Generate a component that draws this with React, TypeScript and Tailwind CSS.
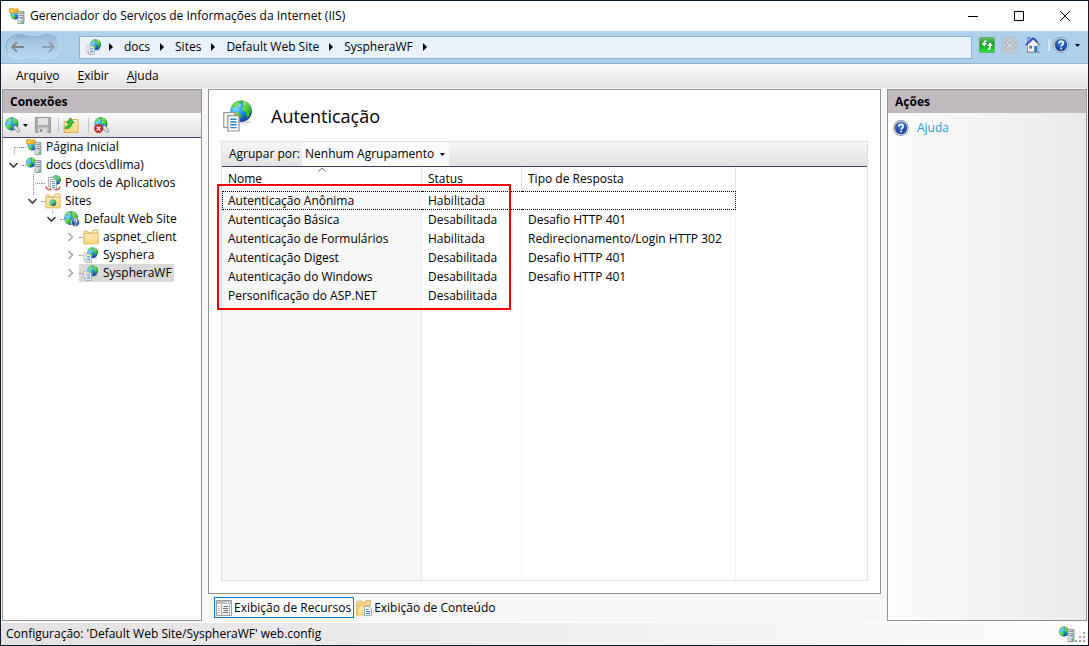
import { useState } from "react";
import type { ReactNode } from "react";

/* ---------- Shared drawing pieces ---------- */

function Gradients() {
  return (
    <svg className="absolute size-0" aria-hidden="true">
      <defs>
        <radialGradient id="ocean" cx="0.25" cy="0.35" r="0.85">
          <stop offset="0" stopColor="#8fe6ff" />
          <stop offset="0.35" stopColor="#2ba0f0" />
          <stop offset="0.7" stopColor="#1557c8" />
          <stop offset="1" stopColor="#0b2f92" />
        </radialGradient>
        <linearGradient id="land" x1="0" y1="0" x2="1" y2="1">
          <stop offset="0" stopColor="#b4f65a" />
          <stop offset="0.55" stopColor="#3fc632" />
          <stop offset="1" stopColor="#128a26" />
        </linearGradient>
        <linearGradient id="folder" x1="0" y1="0" x2="0" y2="1">
          <stop offset="0" stopColor="#fdeab0" />
          <stop offset="1" stopColor="#f8d680" />
        </linearGradient>
        <linearGradient id="metal" x1="0" y1="0" x2="1" y2="0">
          <stop offset="0" stopColor="#eef2f5" />
          <stop offset="1" stopColor="#a3b0bb" />
        </linearGradient>
        <linearGradient id="green" x1="0" y1="0" x2="0" y2="1">
          <stop offset="0" stopColor="#6cc070" />
          <stop offset="0.45" stopColor="#109a1e" />
          <stop offset="1" stopColor="#22ee38" />
        </linearGradient>
        <radialGradient id="helpBlue" cx="0.5" cy="0.25" r="0.8">
          <stop offset="0" stopColor="#4a86e0" />
          <stop offset="1" stopColor="#0a2f98" />
        </radialGradient>
        <linearGradient id="pill" x1="0" y1="0" x2="0" y2="1">
          <stop offset="0" stopColor="#8fb2d1" />
          <stop offset="0.3" stopColor="#a6c6e2" />
          <stop offset="1" stopColor="#bcd9f1" />
        </linearGradient>
      </defs>
    </svg>
  );
}

function Globe({ x, y, r }: { x: number; y: number; r: number }) {
  return (
    <g transform={`translate(${x} ${y}) scale(${r / 8})`}>
      <circle r="8" fill="url(#ocean)" />
      <path
        d="M-5.500-5.800C-3.800-7.400-1.400-8 .6-7.900L.2-6.400-1.600-5.600-1.400-4-3.400-2.800-4.600-3.400-6.200-2.200-7-3.400C-6.600-4.400-6.200-5.200-5.500-5.800Z"
        fill="url(#land)"
      />
      <path d="M1.800-7.800C5.200-7 7.600-4 8-.6L6.800 1.400 6.200 4 4.600 4.800 3.600 2.600 3.800.6 1.800 0 .8-2 2-4 1.200-5.600Z" fill="url(#land)" />
      <path d="M-6 1.200-3.600.4-1 1.600.8 3.600-.6 5.400-.8 7.800C-3.600 7.600-6 5.600-7 3Z" fill="url(#land)" />
      <ellipse cx="-2.200" cy="-4.600" rx="2.600" ry="1.500" fill="#fff" opacity="0.35" />
    </g>
  );
}

function Tower() {
  return (
    <g transform="translate(8.500 3)">
      <path d="M.5.500h6v12h-6z" fill="url(#metal)" stroke="#8492a0" strokeWidth="0.800" />
      <path d="M1.500 2.500h4M1.500 4.500h4M1.500 6.500h4" stroke="#5f6c78" strokeWidth="0.800" />
      <path d="M1.500 3.300h4M1.500 5.300h4" stroke="#fff" strokeWidth="0.700" />
      <path d="M4 10h2v1.600H4z" fill="#2edb1f" />
    </g>
  );
}

function Icon({ children, size = "size-4" }: { children: ReactNode; size?: string }) {
  return (
    <svg viewBox="0 0 16 16" className={`${size} shrink-0`} aria-hidden="true">
      {children}
    </svg>
  );
}

function ServerIcon({ home = false }: { home?: boolean }) {
  return (
    <Icon>
      <Globe x={home ? 6.5 : 5} y={home ? 6.5 : 5.5} r={5} />
      {home && (
        <g>
          <path d="M0 .8 4 0l1.600 1.200L9 .6l.4 3.600-4.400.8L.6 5Z" fill="#f5b52c" stroke="#d98c0c" strokeWidth="0.500" />
          <path d="M1.400 2.200 4 1.600 4.400 3.800Z" fill="#ffe99a" />
        </g>
      )}
      <Tower />
    </Icon>
  );
}

function SiteIcon({ size }: { size?: string }) {
  return (
    <Icon size={size}>
      <ellipse cx="10.600" cy="11" rx="4" ry="0.900" fill="#000" opacity="0.150" />
      <Globe x={9.500} y={5.600} r={5.400} />
      <path d="M.9 6.300h5.500v7.400H.900z" fill="#fff" stroke="#9a9a9a" strokeWidth="0.600" />
      <path d="M2.900 7.800h5.600v7.700H2.900z" fill="#fff" stroke="#8f8f8f" strokeWidth="0.600" />
      <path d="M4.100 9.600h3.200M4.100 11h3.200M4.100 12.400h3.200M4.100 13.800h3.200" stroke="#2f7fc8" strokeWidth="0.700" />
    </Icon>
  );
}

function PoolsIcon() {
  return (
    <Icon>
      <Globe x={11} y={5} r={4.800} />
      <path d="M3.500 2.500h6v9h-6z" fill="#fff" stroke="#9a9a9a" strokeWidth="0.700" />
      <path d="M1 11.500c.2 2.800 3 3.400 5.500 3.200M15 11.500c-.2 2.800-3 3.400-5.500 3.200" fill="none" stroke="#df5a50" strokeWidth="1.500" />
      <path d="M5.500 4.500h6v9.500h-6z" fill="#fff" stroke="#8f8f8f" strokeWidth="0.700" />
      <path d="M7 6.500h3M7 8.500h3M7 10.500h3M7 12.500h3" stroke="#2f7fc8" strokeWidth="0.800" />
    </Icon>
  );
}

function FolderShape() {
  return (
    <g>
      <path d="M1 3.500V2h3.500l1 1.500H9L10 1h5v13.500H1z" fill="#f6d88a" stroke="#dcb566" strokeWidth="0.800" />
      <path d="M10.500 2.500h3.500" stroke="#fff" strokeWidth="1" />
      <path d="M1 4.500h14v10.500H1z" fill="url(#folder)" stroke="#e0b662" strokeWidth="0.800" />
    </g>
  );
}

function FolderIcon({ globe = false }: { globe?: boolean }) {
  return (
    <Icon>
      <FolderShape />
      {globe && <Globe x={8} y={9.700} r={3.300} />}
    </Icon>
  );
}

function DefaultSiteIcon() {
  return (
    <Icon>
      <Globe x={7} y={7} r={6.900} />
      <circle cx="11.400" cy="11.400" r="4.200" fill="#33589c" stroke="#dfe7f3" strokeWidth="0.900" />
      <path d="M10 10.400c0-2 3-2 3-.2 0 1.200-1.500 1.200-1.500 2.400M11.500 13.400v1" stroke="#fff" strokeWidth="1.100" fill="none" />
    </Icon>
  );
}

function ConnectIcon({ remove = false }: { remove?: boolean }) {
  return (
    <Icon>
      <Globe x={6.800} y={6.800} r={6.600} />
      <path d="M8.500 9.200 11 8.400l3.800 4.600.2 2-2.600.2-4-3.800Z" fill="#c3ccd3" stroke="#8594a0" strokeWidth="0.700" />
      <path d="m10.200 10 3.200 3.600" stroke="#fff" strokeWidth="1" />
      {remove && (
        <g>
          <circle cx="4.600" cy="11.600" r="4.200" fill="#d81e1e" stroke="#a30d0d" strokeWidth="0.500" />
          <path d="m2.800 9.800 3.600 3.600M6.400 9.800l-3.600 3.600" stroke="#fff" strokeWidth="1.400" />
        </g>
      )}
    </Icon>
  );
}

function SaveIcon() {
  return (
    <Icon>
      <path d="M.5.500h15v15H.500z" fill="#adadad" stroke="#989898" />
      <path d="M3 1h10v7H3z" fill="#e2e2e2" />
      <path d="M3.500 10.500h9V16h-9z" fill="#d6d6d6" />
      <path d="M5 12h2v3H5z" fill="#8f8f8f" />
    </Icon>
  );
}

function UpFolderIcon() {
  return (
    <Icon>
      <path d="M1 4.500h7l1-2h6v13H1z" fill="url(#folder)" stroke="#d8ab52" strokeWidth="0.900" />
      <path d="M10 3.500h4" stroke="#fff" />
      <path d="M2 9.800c2.500 0 3.500-1.300 3.600-3.800H3.500L7.400.800l3.800 5.200H8.800c0 3.700-2.300 6.300-6.800 5.500Z" fill="#35c435" stroke="#158a1b" strokeWidth="0.600" />
    </Icon>
  );
}

function HelpIcon() {
  return (
    <Icon>
      <circle cx="8" cy="8" r="7.900" fill="#8e979f" />
      <circle cx="8" cy="8" r="7.100" fill="#dfe5ea" />
      <circle cx="8" cy="8" r="6.200" fill="url(#helpBlue)" />
      <path d="M5.900 6.500c.1-2.900 4.300-2.800 4.300-.3 0 1.600-2 1.700-2 3.400" stroke="#fff" strokeWidth="1.700" fill="none" />
      <path d="M7.300 10.700h1.800v1.700H7.300z" fill="#fff" />
    </Icon>
  );
}

function RefreshIcon() {
  return (
    <Icon>
      <rect x="0.500" y="0.500" width="15" height="15" rx="1" fill="url(#green)" stroke="#6fa877" />
      <path d="M7.500 3.200C5.500 3 4.500 4 4.300 6H2.200l3 3.800L8.200 6H6.100c0-.9.400-1.300 1.400-1.300Z" fill="#fff" />
      <path d="M8.700 13c2 .2 3-.8 3.200-2.800l.1-1.200h2L11 5.200 8 9h2.100v1.200c0 .9-.4 1.300-1.400 1.300Z" fill="#fff" />
    </Icon>
  );
}

function StopIcon() {
  return (
    <Icon>
      <rect x="0.500" y="0.500" width="15" height="15" rx="1" fill="#c0cad3" stroke="#b4bec8" />
      <path d="m3.500 4.500 9 7.500M12.500 4.500l-9 7.500" stroke="#929ba4" strokeWidth="2.800" />
      <path d="m3.800 4.800 8.400 7M12.200 4.800l-8.400 7" stroke="#dbe1e6" strokeWidth="1.500" />
    </Icon>
  );
}

function HomeIcon() {
  return (
    <Icon>
      <path d="M3 .8h2.200v5H3z" fill="#e9eefb" stroke="#2946a8" strokeWidth="0.800" />
      <path d="M2.500 7.500 8.500 2l4.500 5.500v7.500H2.500z" fill="#f4f6fb" stroke="#7b8494" strokeWidth="0.800" />
      <path d="M8.300 1 15.500 8.300" stroke="#8a8f99" strokeWidth="1.200" />
      <path d="M.6 8.200 8.300 1l4.200 4.300" fill="none" stroke="#1f45c6" strokeWidth="1.800" strokeDasharray="1.500 0.300" />
      <path d="M4.200 8.800h2.800v2.800H4.200z" fill="#66778d" />
      <path d="M9.200 9h3v6h-3z" fill="#2780c4" />
      <path d="M1 15.400h14" stroke="#8c8f96" strokeWidth="0.800" />
    </Icon>
  );
}

function FeaturesIcon() {
  return (
    <Icon>
      <path d="M.5.500h15v15H.500z" fill="#fff" stroke="#9a9a9a" />
      <path d="M1 1h14v3H1z" fill="#b9bdc1" />
      <path d="M9 2.500h1M11 2.500h1M13 2.500h1" stroke="#fff" />
      <path d="M2 6.500h2M2 8.500h2M2 10.500h2M2 12.500h2" stroke="#b5b5b5" />
      <path d="M5.500 4v11M13.500 4v11" stroke="#b0b0b0" />
      <path d="M6 5h7v10H6z" fill="#ececec" />
      <path d="M8 6.500h4M7 8.500h5M8 10.500h4M7 12.500h5" stroke="#777" />
    </Icon>
  );
}

function ContentIcon() {
  return (
    <Icon>
      <path d="M.5 15V3.500l1-2.500h4l1 1.500H9L10 .5h4.500V6" fill="#f3d58a" stroke="#dcb161" strokeWidth="0.800" />
      <path d="M3.500 5.500h11L11 15H.500z" fill="url(#folder)" stroke="#dcb161" strokeWidth="0.800" />
      <path d="M8.500 6.500h4.500l2.500 2.500v6.500h-7z" fill="#fff" stroke="#8f9bab" strokeWidth="0.800" />
      <path d="M10 9.500h2.500M10 11.500h4M10 13.500h4" stroke="#2d7bd0" />
    </Icon>
  );
}

function DownCaret() {
  return (
    <svg viewBox="0 0 5 3" className="h-[3px] w-[5px] shrink-0" aria-hidden="true">
      <path d="M0 0h5L2.500 3z" fill="#000" />
    </svg>
  );
}

function RightCaret() {
  return (
    <svg viewBox="0 0 4 8" className="h-2 w-1 shrink-0" aria-hidden="true">
      <path d="M0 0v8l4-4z" fill="#000" />
    </svg>
  );
}

/* ---------- Window sections ---------- */

function TitleBar() {
  return (
    <header className="flex h-[30px] shrink-0 items-center bg-white">
      <div className="flex flex-1 items-center gap-[5px] pl-2">
        <ServerIcon home />
        <h1>Gerenciador do Serviços de Informações da Internet (IIS)</h1>
      </div>
      <button type="button" aria-label="Minimizar" className="flex h-full w-[46px] items-center justify-center">
        <svg viewBox="0 0 10 10" className="size-[10px]"><path d="M0 5.500h10" stroke="#000" /></svg>
      </button>
      <button type="button" aria-label="Maximizar" className="flex h-full w-[46px] items-center justify-center">
        <svg viewBox="0 0 10 10" className="size-[10px]"><path d="M.5.500h9v9h-9z" fill="none" stroke="#000" /></svg>
      </button>
      <button type="button" aria-label="Fechar" className="flex h-full w-[46px] items-center justify-center">
        <svg viewBox="0 0 10 10" className="size-[10px]"><path d="m0 0 10 10M10 0 0 10" stroke="#000" /></svg>
      </button>
    </header>
  );
}

const crumbs = ["docs", "Sites", "Default Web Site", "SyspheraWF"];

function AddressBar() {
  return (
    <div className="flex h-[33px] shrink-0 items-center border-b border-[#93b7d3] bg-[#aed0eb] pr-2 pl-1">
      <div className="relative h-7 w-14 shrink-0">
        <svg viewBox="0 0 56 28" className="absolute inset-0 size-full" aria-hidden="true">
          <path
            d="M13 1.500c6 0 9 2.500 15 2.500s9-2.500 15-2.500a12 12 0 0 1 0 24.500c-6 0-9-2.500-15-2.500s-9 2.500-15 2.500a12 12 0 0 1 0-24.500Z"
            fill="url(#pill)"
            stroke="#c6def1"
          />
          <path d="M3 20A12 12 0 0 1 13 1.500c6 0 9 2.500 15 2.500s9-2.500 15-2.500a12 12 0 0 1 9 4" fill="none" stroke="#84a8c8" />
        </svg>
        <div className="relative flex h-full items-center justify-between px-1.5">
          <button type="button" aria-label="Voltar">
            <svg viewBox="0 0 13 12" className="h-3 w-[13px]"><path d="M13 6H1.500M6 1.200 1.200 6 6 10.800" fill="none" stroke="#7f8487" strokeWidth="1.800" /></svg>
          </button>
          <button type="button" aria-label="Avançar">
            <svg viewBox="0 0 13 12" className="h-3 w-[13px]"><path d="M0 6h11.500M7 1.200 11.800 6 7 10.800" fill="none" stroke="#8f9dab" strokeWidth="1.800" /></svg>
          </button>
        </div>
      </div>
      <nav aria-label="Caminho" className="ml-[18px] flex h-[23px] flex-1 items-center gap-[11px] border border-[#90b0cc] bg-[#e9f2fa] pl-1.5">
        <div className="flex items-center gap-[7px]">
          <SiteIcon />
          <RightCaret />
        </div>
        {crumbs.map((c) => (
          <div key={c} className="flex items-center gap-[10px]">
            <button type="button">{c}</button>
            <RightCaret />
          </div>
        ))}
      </nav>
      <div className="ml-[7px] flex items-center gap-[7px] pb-1">
        <button type="button" aria-label="Atualizar"><RefreshIcon /></button>
        <button type="button" aria-label="Parar"><StopIcon /></button>
        <button type="button" aria-label="Início"><HomeIcon /></button>
        <div className="flex items-center gap-[3px]">
          <span className="h-3 w-0.5 bg-[#d6e6f2]" />
          <button type="button" aria-label="Ajuda" className="flex items-center gap-1.5">
            <HelpIcon />
            <DownCaret />
          </button>
        </div>
      </div>
    </div>
  );
}

function MenuBar() {
  return (
    <nav aria-label="Menu" className="flex h-6 shrink-0 items-center gap-[18px] bg-linear-to-b from-[#fdfdfd] to-[#e3e2e2] pl-[15px]">
      <button type="button">Arqui<u className="underline-offset-2">v</u>o</button>
      <button type="button"><u className="underline-offset-2">E</u>xibir</button>
      <button type="button"><u className="underline-offset-2">A</u>juda</button>
    </nav>
  );
}

function PanelHeader({ children }: { children: ReactNode }) {
  return <h2 className="flex h-[23px] shrink-0 items-center bg-[#c0babf] pl-[7px] font-bold">{children}</h2>;
}

function Separator() {
  return <span className="h-3.5 w-px bg-[#c5c2b8]" />;
}

type Expander = "root" | "open" | "closed" | "first" | "middle";

function ExpanderMark({ kind }: { kind: Expander }) {
  return (
    <svg viewBox="0 0 18 18" className="h-[18px] w-[18px] shrink-0 overflow-visible" aria-hidden="true">
      {kind === "open" && <path d="M10.500 0v4" stroke="#8c8c8c" strokeDasharray="1 1" />}
      {(kind === "open" || kind === "root") && (
        <path d="m5.500 7 4 4 4-4" fill="none" stroke="#404040" strokeWidth="1.700" />
      )}
      {kind === "closed" && <path d="m7.500 5 4 4-4 4" fill="none" stroke="#a6a6a6" strokeWidth="1.500" />}
      {kind === "first" && <path d="M18 9.500h-8M10.500 9.500v8" stroke="#8c8c8c" strokeDasharray="1 1" fill="none" />}
      {kind === "middle" && <path d="M10.500 0v18M12 9.500h6" stroke="#8c8c8c" strokeDasharray="1 1" fill="none" />}
    </svg>
  );
}

interface Node {
  label: string;
  indent: string;
  mark: Expander;
  icon: ReactNode;
}

const nodes: Node[] = [
  { label: "Página Inicial", indent: "pl-px", mark: "first", icon: <ServerIcon home /> },
  { label: "docs (docs\\dlima)", indent: "pl-px", mark: "root", icon: <ServerIcon /> },
  { label: "Pools de Aplicativos", indent: "pl-5", mark: "middle", icon: <PoolsIcon /> },
  { label: "Sites", indent: "pl-5", mark: "open", icon: <FolderIcon globe /> },
  { label: "Default Web Site", indent: "pl-[39px]", mark: "open", icon: <DefaultSiteIcon /> },
  { label: "aspnet_client", indent: "pl-[58px]", mark: "closed", icon: <FolderIcon /> },
  { label: "Sysphera", indent: "pl-[58px]", mark: "closed", icon: <SiteIcon /> },
  { label: "SyspheraWF", indent: "pl-[58px]", mark: "closed", icon: <SiteIcon /> },
];

function ConnectionsPanel() {
  const [selected, setSelected] = useState("SyspheraWF");
  return (
    <aside className="flex w-[200px] shrink-0 flex-col border border-[#949294] bg-white">
      <PanelHeader>Conexões</PanelHeader>
      <div className="flex h-[25px] shrink-0 items-center gap-[7px] border-b border-[#464473] bg-linear-to-b from-[#fbfbfb] to-[#e2e0e1] pl-0.5">
        <button type="button" aria-label="Conectar" className="flex items-center gap-0.5">
          <ConnectIcon />
          <DownCaret />
        </button>
        <button type="button" aria-label="Salvar"><SaveIcon /></button>
        <div className="flex items-center gap-1">
          <Separator />
          <button type="button" aria-label="Acima"><UpFolderIcon /></button>
        </div>
        <div className="flex items-center gap-[5px] pl-0.5">
          <Separator />
          <button type="button" aria-label="Desconectar"><ConnectIcon remove /></button>
        </div>
      </div>
      <ul>
        {nodes.map((n) => (
          <li key={n.label} className={`flex h-[18px] items-center ${n.indent}`}>
            <ExpanderMark kind={n.mark} />
            <button
              type="button"
              onClick={() => setSelected(n.label)}
              className={`flex h-full items-center pr-0.5 ${selected === n.label ? "bg-[#d9d9d9]" : ""}`}
            >
              <span className="w-1 border-t border-dotted border-[#8c8c8c]" />
              <span className="flex items-center gap-1">
                {n.icon}
                <span className="whitespace-nowrap">{n.label}</span>
              </span>
            </button>
          </li>
        ))}
      </ul>
    </aside>
  );
}

const rows = [
  ["Autenticação Anônima", "Habilitada", ""],
  ["Autenticação Básica", "Desabilitada", "Desafio HTTP 401"],
  ["Autenticação de Formulários", "Habilitada", "Redirecionamento/Login HTTP 302"],
  ["Autenticação Digest", "Desabilitada", "Desafio HTTP 401"],
  ["Autenticação do Windows", "Desabilitada", "Desafio HTTP 401"],
  ["Personificação do ASP.NET", "Desabilitada", ""],
];

function FeatureTable() {
  return (
    <div className="relative flex-1">
      <table className="h-full w-full table-fixed border-separate border-spacing-0 text-left">
        <colgroup>
          <col className="w-[200px] bg-[#f7f7f7]" />
          <col className="w-[100px]" />
          <col className="w-[214px]" />
          <col />
        </colgroup>
        <thead>
          <tr className="h-6">
            <th scope="col" className="relative border-r border-[#e5e5e5] bg-white pl-1.5 font-normal">
              <svg viewBox="0 0 8 5" className="absolute top-0 left-[96px] h-[5px] w-2" aria-hidden="true">
                <path d="m.5 4.500 3.500-3.500 3.500 3.500" fill="none" stroke="#6d6d6d" />
              </svg>
              Nome
            </th>
            <th scope="col" className="border-r border-[#e5e5e5] pl-1.5 font-normal">Status</th>
            <th scope="col" className="border-r border-[#e5e5e5] pl-1.5 font-normal">Tipo de Resposta</th>
            <td />
          </tr>
        </thead>
        <tbody>
          {rows.map((r, i) => (
            <tr key={r[0]} className="h-[19px]">
              {r.map((cell, j) => (
                <td
                  key={j}
                  className={`whitespace-nowrap p-0 ${
                    i === 0
                      ? `border-y border-dotted border-black ${j === 0 ? "border-l pl-[5px]" : "pl-1.5"} ${j === 2 ? "border-r" : ""}`
                      : "border-r border-[#edf3f8] pl-1.5"
                  }`}
                >
                  <span className="block leading-[17px]">{cell}</span>
                </td>
              ))}
              <td />
            </tr>
          ))}
          <tr>
            <td className="border-r border-[#dcebf7]" />
            <td className="border-r border-[#edf3f8]" />
            <td className="border-r border-[#edf3f8]" />
            <td />
          </tr>
        </tbody>
      </table>
      <div className="pointer-events-none absolute top-[17px] -left-[5px] h-[126px] w-[294px] border-2 border-[#ff0000]" />
    </div>
  );
}

function FeaturePanel() {
  return (
    <main className="flex flex-1 flex-col">
      <section className="flex flex-1 flex-col border border-[#949294] bg-white px-3 pb-3">
        <div className="flex h-[51px] shrink-0 items-center gap-[17px] pl-px">
          <SiteIcon size="size-8" />
          <h2 className="text-[18px] leading-6">Autenticação</h2>
        </div>
        <div className="flex flex-1 flex-col border border-[#e0dfe0]">
          <div className="flex h-[25px] shrink-0 items-center border-b border-[#3e3c66] bg-linear-to-b from-[#f8f7f8] to-[#e2e0e1] pl-[7px]">
            <label htmlFor="group-by" className="w-[73px] whitespace-nowrap">Agrupar por:</label>
            <div className="relative flex h-6 w-[147px] items-center bg-[#fbfafb]">
              <select id="group-by" className="size-full appearance-none bg-transparent pl-[3px] outline-none">
                <option>Nenhum Agrupamento</option>
              </select>
              <span className="pointer-events-none absolute right-1 flex h-full items-center">
                <DownCaret />
              </span>
            </div>
          </div>
          <FeatureTable />
        </div>
      </section>
      <div className="flex h-[27px] shrink-0 items-center gap-0.5 pl-1.5">
        <button type="button" className="flex h-[21px] items-center gap-0.5 border border-[#0078d7] bg-white pr-0.5 pl-px whitespace-nowrap">
          <FeaturesIcon />
          Exibição de Recursos
        </button>
        <button type="button" className="flex h-[21px] items-center gap-0.5 whitespace-nowrap">
          <ContentIcon />
          Exibição de Conteúdo
        </button>
      </div>
    </main>
  );
}

function ActionsPanel() {
  return (
    <aside className="flex w-[200px] shrink-0 flex-col border border-[#949294] bg-linear-to-r from-[#fcfcfc] to-[#eaeaea]">
      <PanelHeader>Ações</PanelHeader>
      <a href="#ajuda" className="flex h-[29px] items-center gap-2 pl-[5px] text-[#1a9edb]">
        <HelpIcon />
        Ajuda
      </a>
    </aside>
  );
}

function StatusBar() {
  return (
    <footer className="flex h-[23px] shrink-0 items-center justify-between border-t border-white bg-linear-to-r from-[#e3e1e2] to-[#fdfcfd] pr-[3px] pl-[5px]">
      <span>Configuração: 'Default Web Site/SyspheraWF' web.config</span>
      <span className="flex items-end">
        <ServerIcon />
        <svg viewBox="0 0 10 10" className="size-[10px]" aria-hidden="true">
          <path d="M8 0h2v2H8zM4 4h2v2H4zM8 4h2v2H8zM0 8h2v2H0zM4 8h2v2H4zM8 8h2v2H8z" fill="#a5a5a5" />
        </svg>
      </span>
    </footer>
  );
}

export default function App() {
  return (
    <div className="flex min-h-screen flex-col border border-[#0c1d2e] bg-[#f7f7f7] font-['Open_Sans','Noto_Sans',sans-serif] text-[12px] leading-4 text-black">
      <Gradients />
      <TitleBar />
      <AddressBar />
      <MenuBar />
      <div className="flex flex-1 gap-1.5 px-px pt-px pb-px">
        <ConnectionsPanel />
        <FeaturePanel />
        <ActionsPanel />
      </div>
      <StatusBar />
    </div>
  );
}
